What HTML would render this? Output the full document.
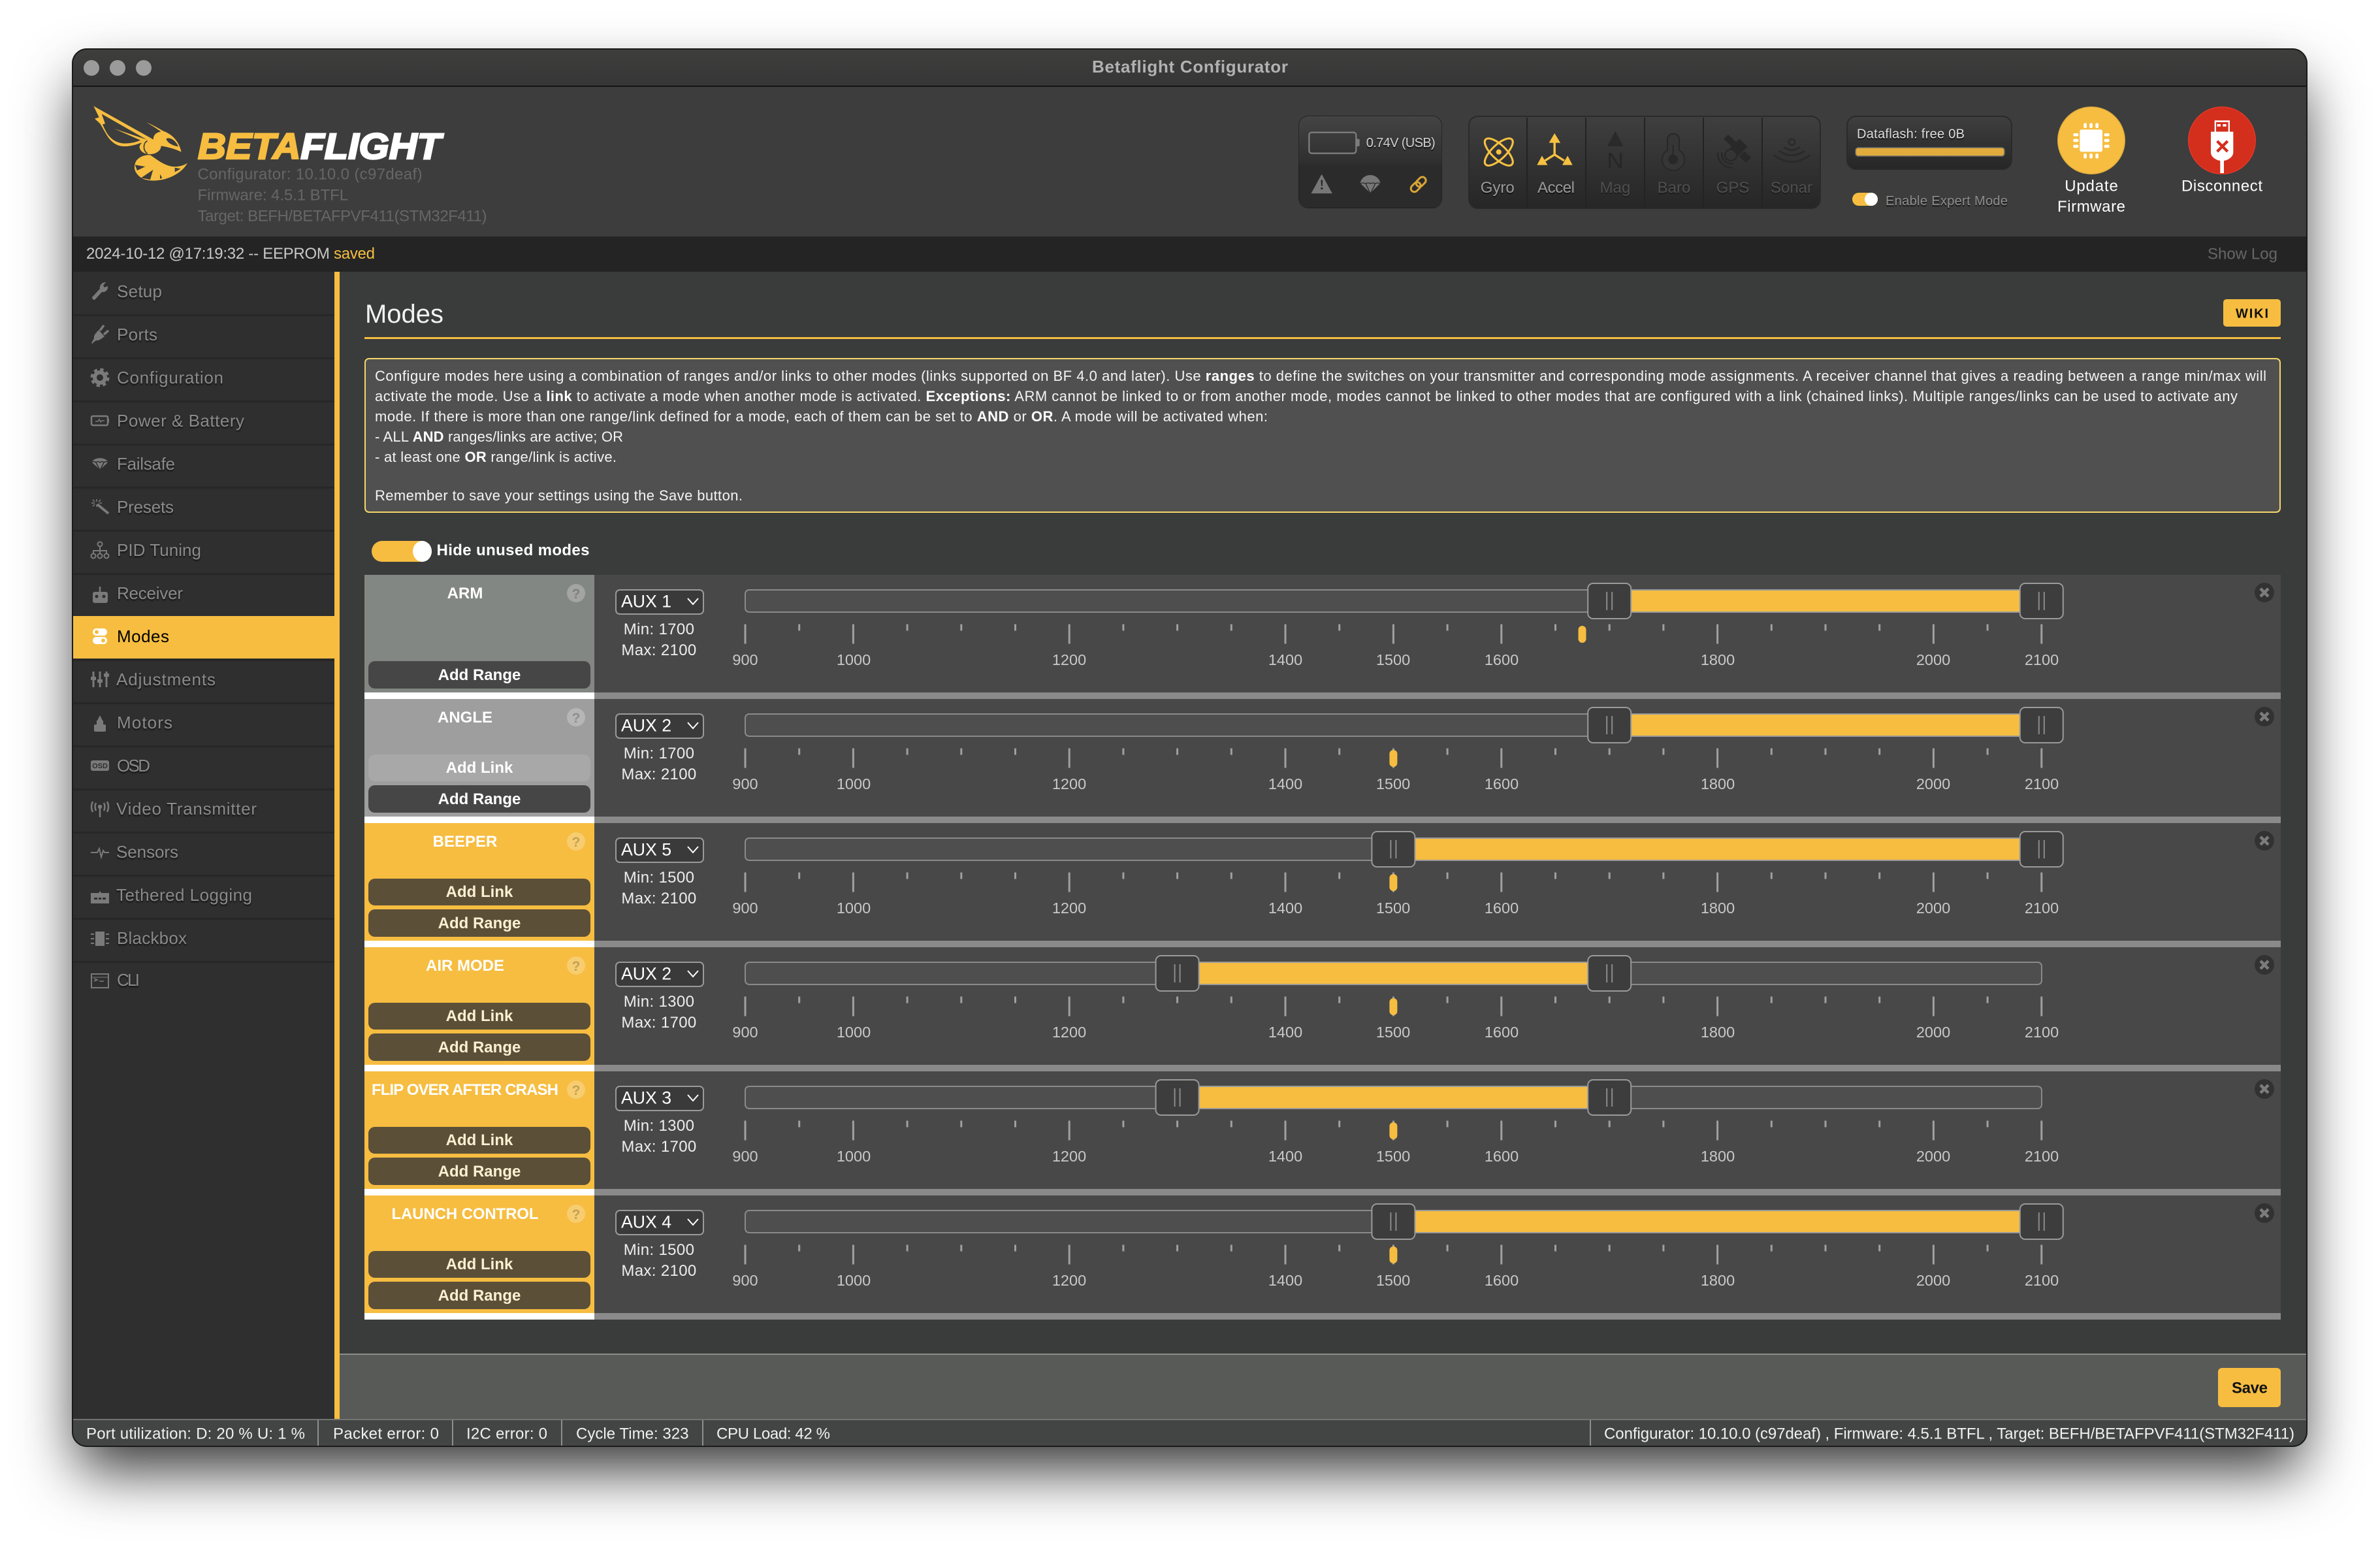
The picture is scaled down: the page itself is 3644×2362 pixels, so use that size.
<!DOCTYPE html>
<html><head><meta charset="utf-8"><title>Betaflight Configurator</title>
<style>
html,body{margin:0;padding:0;background:#fff;width:3644px;height:2362px;overflow:hidden}
#sh{position:absolute;left:111px;top:75px;width:3421px;height:2139px;border-radius:22px;box-shadow:0 44px 90px -8px rgba(0,0,0,.8)}
svg#p{position:absolute;left:0;top:0}
text{font-family:"Liberation Sans",sans-serif;font-size:24px;white-space:pre}
.s{font-size:26px;fill:#8a8a8a;text-shadow:0 2px 2px #111}
.v{fill:#666}
.i{font-size:22px;fill:#f4f4f4}
.i tspan{font-weight:bold;fill:#fff}
.t{font-weight:bold;fill:#fff;text-anchor:middle}
.q{font-weight:bold;font-size:21px;text-anchor:middle;fill:rgba(0,0,0,.22)}
.a{font-size:26.67px;fill:#fff}
.m{fill:#eee;text-anchor:middle;letter-spacing:.35px}
.n{fill:#c8c8c8;text-anchor:middle;font-size:23.5px}
.ba{font-weight:bold;fill:#fff;text-anchor:middle}
.by{font-weight:bold;fill:#fdf0d2;text-anchor:middle}
.st{fill:#f0f0f0}
.se{text-anchor:middle;fill:#9a9a9a;text-shadow:0 2px 1px #111}
.sd{text-anchor:middle;fill:#4e4e4e;text-shadow:0 2px 1px #1c1c1c}
.ic{fill:#7a7a7a;stroke:none}
</style></head>
<body>
<div id="sh"></div>
<svg id="p" width="3644" height="2362" viewBox="0 0 3644 2362" xmlns="http://www.w3.org/2000/svg">
<defs>
<clipPath id="win"><rect x="111" y="75" width="3421" height="2139" rx="22"/></clipPath>
<linearGradient id="g1" x1="0" y1="0" x2="0" y2="1"><stop offset="0" stop-color="#444"/><stop offset="1" stop-color="#2e2e2e"/></linearGradient>
<linearGradient id="g2" x1="0" y1="0" x2="0" y2="1"><stop offset="0" stop-color="#3f3f3f"/><stop offset="1" stop-color="#262626"/></linearGradient>
<linearGradient id="g3" x1="0" y1="0" x2="0" y2="1"><stop offset="0" stop-color="#3e3e3d"/><stop offset="1" stop-color="#363636"/></linearGradient>
<g id="sel"><rect x="943" y="23" width="134" height="37" rx="6" fill="#3a3a3a" stroke="#9a9a9a" stroke-width="2"/><path d="M1053 36l8 9 8-9" fill="none" stroke="#fff" stroke-width="2"/></g>
<g id="track">
<rect x="1141" y="23" width="1985" height="34" rx="6" fill="#4e4e4e" stroke="#8a8a8a" stroke-width="2"/>
<path fill="none" stroke="#a0a0a0" stroke-width="3" d="M1141 75.5v30M1223.7 75.5v10M1306.4 75.5v30M1389.1 75.5v10M1471.8 75.5v10M1554.5 75.5v10M1637.2 75.5v30M1719.9 75.5v10M1802.6 75.5v10M1885.3 75.5v10M1968 75.5v30M2050.7 75.5v10M2133.4 75.5v30M2216.1 75.5v10M2298.8 75.5v30M2381.5 75.5v10M2464.2 75.5v10M2546.9 75.5v10M2629.6 75.5v30M2712.3 75.5v10M2795 75.5v10M2877.7 75.5v10M2960.4 75.5v30M3043.1 75.5v10M3125.8 75.5v30"/>
<circle cx="3467" cy="27" r="15" fill="#323232"/><path d="M3461 21l12 12M3473 21l-12 12" stroke="#7c7c7c" stroke-width="4.500"/>
</g>
<g id="h"><rect x="-33" y="13" width="66" height="54" rx="8" fill="#3d3d3d" stroke="#9a9a9a" stroke-width="2"/><path d="M-4 26v28M4 26v28" stroke="#8b8b8b" stroke-width="2"/></g>
</defs>
<g clip-path="url(#win)">
<rect x="111" y="75" width="3421" height="2139" fill="#3a3c3b"/>
<!-- title bar -->
<rect x="111" y="75" width="3421" height="56" fill="url(#g3)"/>
<rect x="111" y="131" width="3421" height="2" fill="#151515"/>
<circle cx="140" cy="104" r="12" fill="#9b9b9b"/><circle cx="180" cy="104" r="12" fill="#9b9b9b"/><circle cx="220" cy="104" r="12" fill="#9b9b9b"/>
<text x="1672" y="111" font-weight="bold" fill="#b2b2b2" textLength="300" style="font-size:26px">Betaflight Configurator</text>
<!-- header -->
<rect x="111" y="133" width="3421" height="229" fill="#3c3d3c"/>
<svg x="135" y="155" width="160" height="130" viewBox="0 0 480 390">
<path fill="#f6bd41" fill-rule="evenodd" d="M25 22L300 176L296 184L240 192C210 203 185 208 160 207C125 205 100 180 85 155L55 103L30 80L50 74ZM62 58L78 103L66 106C85 150 105 188 165 194C190 194 215 190 240 179L120 126L268 176Z"/>
<path fill="#f6bd41" fill-rule="evenodd" d="M268 97C300 110 325 125 345 137C385 150 418 185 428 233C405 222 375 212 335 205C335 225 315 240 290 243C265 245 240 235 236 212C235 195 255 178 300 175C298 160 310 142 335 140C315 125 290 110 268 97ZM358 172C380 162 405 185 414 208C395 205 365 195 358 172Z"/>
<path d="M272 182C252 190 250 225 272 240" fill="none" stroke="#3c3d3c" stroke-width="5"/>
<path fill="#f6bd41" d="M285 247C310 262 345 295 390 300C415 302 440 295 456 283C440 315 400 345 350 358C310 368 260 368 235 345C212 325 205 300 222 272C235 255 260 245 285 247Z"/>
<path fill="#3c3d3c" d="M215 292L262 300L225 318ZM243 352L298 315L285 360ZM330 335L340 352L330 356ZM398 305L425 310L398 325Z"/>
</svg>
<text x="303" y="243" font-weight="bold" font-style="italic" textLength="372" lengthAdjust="spacingAndGlyphs" style="font-size:56px" stroke-width="2.600"><tspan fill="#f6bd41" stroke="#f6bd41">BETA</tspan><tspan fill="#fff" stroke="#fff">FLIGHT</tspan></text>
<text class="v" x="302.5" y="274.7" textLength="344">Configurator: 10.10.0 (c97deaf)</text>
<text class="v" x="302.5" y="306.7" textLength="230.6">Firmware: 4.5.1 BTFL</text>
<text class="v" x="302.5" y="338.7" textLength="443">Target: BEFH/BETAFPVF411(STM32F411)</text>
<!-- battery box -->
<rect x="1989" y="178" width="218" height="140" rx="14" fill="#2b2b2b" stroke="#262626" stroke-width="2"/>
<path d="M1989 252V192a14 14 0 0 1 14-14h190a14 14 0 0 1 14 14v60z" fill="url(#g1)"/>
<rect x="1990" y="252" width="216" height="65" rx="8" fill="#2b2b2b"/>
<svg x="1985" y="175" width="225" height="145" viewBox="0 0 675 435">
<rect x="58" y="83" width="216" height="96" rx="12" fill="none" stroke="#7c7c7c" stroke-width="7"/><path d="M276 113h8q6 0 6 6v22q0 6-6 6h-8z" fill="#7c7c7c"/>
<path d="M116 278L162 362H70Z" fill="#777" stroke="#777" stroke-width="3" stroke-linejoin="round"/><path d="M112 302h9l-2 28h-5zM112 336h9v9h-9z" fill="#2b2b2b"/>
<path d="M292 318C302 266 376 266 386 318L340 365Z" fill="#777"/><path d="M292 318L340 365L386 318M318 318L340 365L362 318M292 318Q305 312 318 318Q329 312 340 318Q351 312 362 318Q374 312 386 318" fill="none" stroke="#2b2b2b" stroke-width="4"/>
<g fill="none" stroke="#d9a536" stroke-width="9" transform="rotate(-45 560 322)"><rect x="518" y="306" width="50" height="32" rx="16"/><rect x="552" y="306" width="50" height="32" rx="16"/></g>
</svg>
<text x="2091.7" y="225" textLength="106" style="font-size:20px;text-shadow:0 2px 1px #111" fill="#cfcfcf">0.74V (USB)</text>
<!-- sensors box -->
<rect x="2249" y="178" width="538" height="141" rx="14" fill="url(#g2)" stroke="#2a2a2a" stroke-width="2"/>
<path d="M2338 180v138M2428 180v138M2518 180v138M2608 180v138M2698 180v138" stroke="#232323" stroke-width="2"/>
<svg x="2250" y="180" width="540" height="140" viewBox="0 0 1568 420" preserveAspectRatio="none">
<g fill="none" stroke="#f6c142" stroke-width="9"><ellipse cx="130" cy="158" rx="82" ry="32" transform="rotate(45 130 158)"/><ellipse cx="130" cy="158" rx="82" ry="32" transform="rotate(-45 130 158)"/></g><circle cx="130" cy="158" r="12" fill="#f6c142"/>
<path d="M378 110V170L335 198M378 170L421 198" fill="none" stroke="#f6c142" stroke-width="10"/><path d="M378 72L404 116H353ZM300 218L322 175L347 218ZM458 218L412 218L436 175Z" fill="#f6c142"/>
<path d="M648 62L684 132H612Z" fill="#2a2a2a"/>
<text x="648" y="233" text-anchor="middle" style="font-size:104px" fill="#262626">N</text>
<path d="M880 100a25 25 0 0 1 52 0V150a50 50 0 1 1-52 0Z" fill="#363636" stroke="#282828" stroke-width="6"/><circle cx="905" cy="192" r="22" fill="#282828"/><path d="M905 125v50" stroke="#282828" stroke-width="6"/>
<g fill="#282828"><path d="M1150 78L1185 112L1165 132L1130 98ZM1200 98L1236 134L1194 176L1158 140ZM1222 155L1252 185L1228 208L1198 178Z"/></g>
<g fill="none" stroke="#282828" stroke-width="7"><circle cx="1162" cy="172" r="26"/><path d="M1122 160C1118 190 1140 215 1172 212M1104 160C1100 200 1130 232 1172 230"/></g>
<circle cx="1433" cy="112" r="14" fill="none" stroke="#2a2a2a" stroke-width="7"/>
<g fill="none" stroke="#2a2a2a" stroke-width="9"><path d="M1398 135Q1433 165 1468 135M1376 152Q1433 195 1490 152M1353 172Q1433 235 1513 172"/></g>
</svg>
<text class="se" x="2292.7" y="295" textLength="52">Gyro</text>
<text class="se" x="2382.5" y="295" textLength="57">Accel</text>
<text class="sd" x="2473" y="295">Mag</text>
<text class="sd" x="2563" y="295">Baro</text>
<text class="sd" x="2653" y="295">GPS</text>
<text class="sd" x="2743" y="295">Sonar</text>
<!-- dataflash -->
<rect x="2828" y="178" width="252" height="81" rx="14" fill="url(#g2)" stroke="#2a2a2a" stroke-width="2"/>
<text x="2843" y="211.7" textLength="165" style="font-size:20px;text-shadow:0 2px 1px #111" fill="#ddd">Dataflash: free 0B</text>
<rect x="2841" y="226" width="228" height="13" rx="4" fill="#e2ac3c" stroke="#6a6a6a" stroke-width="1.5"/>
<rect x="2836" y="295" width="39" height="20" rx="10" fill="#f6bd41"/><circle cx="2865" cy="305" r="10" fill="#fff"/>
<text x="2887" y="314" textLength="187" style="font-size:20px;text-shadow:0 2px 1px #111" fill="#8e8e8e">Enable Expert Mode</text>
<!-- update / disconnect -->
<svg x="3140" y="150" width="340" height="130" viewBox="0 0 1020 390">
<circle cx="186" cy="195" r="154" fill="#f6bd41" stroke="#d9a93c" stroke-width="4"/>
<rect x="133" y="145" width="104" height="102" rx="8" fill="#fff"/>
<g fill="#fff"><rect x="151" y="115" width="14" height="23" rx="6"/><rect x="178" y="115" width="14" height="23" rx="6"/><rect x="205" y="115" width="14" height="23" rx="6"/><rect x="151" y="255" width="14" height="23" rx="6"/><rect x="178" y="255" width="14" height="23" rx="6"/><rect x="205" y="255" width="14" height="23" rx="6"/><rect x="103" y="162" width="24" height="14" rx="6"/><rect x="103" y="188" width="24" height="14" rx="6"/><rect x="103" y="215" width="24" height="14" rx="6"/><rect x="245" y="162" width="24" height="14" rx="6"/><rect x="245" y="188" width="24" height="14" rx="6"/><rect x="245" y="215" width="24" height="14" rx="6"/></g>
<circle cx="786" cy="195" r="154" fill="#d42e1d" stroke="#e8392a" stroke-width="4"/>
<rect x="752" y="103" width="70" height="56" fill="#fff"/><rect x="759" y="111" width="56" height="44" fill="#d42e1d"/><rect x="764" y="120" width="16" height="11" fill="#fff"/><rect x="790" y="120" width="16" height="11" fill="#fff"/>
<path d="M735 155H838V250C838 270 815 285 795 288V345H778V288C758 285 735 270 735 250Z" fill="#fff"/>
<path d="M764 198L812 246M812 198L764 246" stroke="#d42e1d" stroke-width="13"/>
</svg>
<text x="3202" y="292.7" fill="#fff" text-anchor="middle" textLength="81.6">Update</text>
<text x="3202" y="324" fill="#fff" text-anchor="middle" textLength="104">Firmware</text>
<text x="3402" y="292.7" fill="#fff" text-anchor="middle" textLength="124">Disconnect</text>
<!-- log -->
<rect x="111" y="362" width="3421" height="54" fill="#242424"/>
<text x="132" y="396" fill="#c8c8c8" textLength="442">2024-10-12 @17:19:32 -- EEPROM <tspan fill="#f6bd41">saved</tspan></text>
<text x="3380" y="396.7" fill="#666" textLength="107">Show Log</text>
<!-- sidebar -->
<rect x="111" y="416" width="401" height="1756" fill="#2f2f2f"/>
<rect x="512" y="416" width="8" height="1756" fill="#f6bd41"/>
<path d="M111 482.500H512M111 548.500H512M111 614.500H512M111 680.500H512M111 746.500H512M111 812.500H512M111 878.500H512M111 1010.500H512M111 1076.500H512M111 1142.500H512M111 1208.500H512M111 1274.500H512M111 1340.500H512M111 1406.500H512M111 1472.500H512" stroke="#272727" stroke-width="3"/>
<rect x="111" y="943" width="409" height="65" fill="#f6bd41"/>
<g class="ic">
<path transform="translate(139,432)" d="M2 23L14 10C13 5 17 0 23 0L19 5L21 8L26 6C27 12 22 16 17 15L6 27Q2 27 2 23Z"/>
<g transform="translate(139,498)"><path d="M1 27L5 20C4 15 8 12 12 7L21 17C16 21 12 24 8 23L2 28Z"/><path d="M14 8L20 0M20 14L27 8" stroke="#7a7a7a" stroke-width="3.500" fill="none"/></g>
<g transform="translate(139,564)" fill="none" stroke="#7a7a7a"><circle cx="14" cy="14" r="8" stroke-width="6"/><circle cx="14" cy="14" r="12" stroke-width="5" stroke-dasharray="5 4.42"/></g>
<g transform="translate(139,630)" fill="none" stroke="#7a7a7a"><rect x="1" y="7" width="25" height="14" rx="2" stroke-width="2.500"/><path d="M27 11v6" stroke-width="2"/><path d="M7 15h4l2-3 2 4 2-2h4" stroke-width="1.500"/></g>
<g transform="translate(139,696)"><path d="M1 12C5 3 23 3 27 12L14 24Z"/><path d="M1 12L14 24L27 12M8 12L14 24L20 12M1 12Q4.500 9 8 12Q11 9 14 12Q17 9 20 12Q23.500 9 27 12" fill="none" stroke="#2f2f2f" stroke-width="1.500"/></g>
<g transform="translate(139,762)" fill="none" stroke="#7a7a7a"><path d="M10 10L27 24" stroke-width="4"/><path d="M9 2v4M9 10v4M1 8h5M13 8h4M3 3l3 3M15 3l-3 3M3 13l3-3" stroke-width="1.500"/></g>
<g transform="translate(139,828)"><circle cx="14" cy="5" r="3.500" fill="none" stroke="#7a7a7a" stroke-width="2"/><circle cx="4" cy="23" r="3.500" fill="none" stroke="#7a7a7a" stroke-width="2"/><circle cx="14" cy="23" r="3.500" fill="none" stroke="#7a7a7a" stroke-width="2"/><circle cx="24" cy="23" r="3.500" fill="none" stroke="#7a7a7a" stroke-width="2"/><path d="M14 8v12M4 20v-5h20v5" fill="none" stroke="#7a7a7a" stroke-width="2"/></g>
<g transform="translate(139,894)"><rect x="3" y="12" width="23" height="17" rx="3"/><path d="M14 4v8" stroke="#7a7a7a" stroke-width="2.500"/><circle cx="9" cy="19" r="2.500" fill="#2f2f2f"/><circle cx="20" cy="19" r="2.500" fill="#2f2f2f"/></g>
<g transform="translate(139,960)"><rect x="3" y="2" width="22" height="11" rx="5.500" fill="#fff"/><rect x="3" y="15" width="22" height="11" rx="5.500" fill="#fff"/><circle cx="9" cy="7.500" r="3" fill="#f6bd41"/><circle cx="19" cy="20.500" r="3" fill="#f6bd41"/></g>
<g transform="translate(139,1026)"><path d="M4 2v24M14 2v24M24 2v24" stroke="#7a7a7a" stroke-width="3" fill="none"/><path d="M0 10h8v5H0zM10 14h8v5h-8zM20 5h8v5h-8z"/></g>
<g transform="translate(139,1092)"><rect x="5" y="17" width="18" height="11" rx="2"/><rect x="9" y="11" width="10" height="7"/><path d="M14 3l4 8h-8z"/></g>
<g transform="translate(139,1158)"><rect x="0" y="6" width="28" height="16" rx="3"/><text x="14" y="18" text-anchor="middle" style="font-size:11px;font-weight:bold" fill="#2f2f2f">OSD</text></g>
<g transform="translate(139,1224)" fill="none" stroke="#7a7a7a" stroke-width="2.500"><path d="M14 13v14" /><circle cx="14" cy="11" r="2" fill="#7a7a7a"/><path d="M8 5Q5 11 8 17M20 5Q23 11 20 17M3 3Q-1 11 3 19M25 3Q29 11 25 19"/></g>
<polyline transform="translate(139,1290)" points="0,15 10,15 13,9 16,22 19,12 21,15 28,15" fill="none" stroke="#7a7a7a" stroke-width="2"/>
<g transform="translate(139,1356)"><path d="M0 11h12l2-3 2 3h12v16H0z"/><path d="M5 18h5v3H5zM12 18h4v3h-4zM18 18h5v3h-5z" fill="#2f2f2f"/></g>
<g transform="translate(139,1422)"><rect x="7" y="4" width="14" height="22"/><path d="M0 8h5M0 15h5M0 22h5M23 8h5M23 15h5M23 22h5" stroke="#7a7a7a" stroke-width="2"/></g>
<g transform="translate(139,1486)" fill="none" stroke="#7a7a7a" stroke-width="2"><rect x="1" y="5" width="26" height="21"/><path d="M1 10h26" stroke-width="1"/><path d="M5 12l5 2-5 2M13 16h7" stroke-width="1.500"/></g>
</g>
<text class="s" x="179" y="455" textLength="69">Setup</text>
<text class="s" x="179" y="521" textLength="62">Ports</text>
<text class="s" x="179" y="587" textLength="163">Configuration</text>
<text class="s" x="179" y="653" textLength="195">Power &amp; Battery</text>
<text class="s" x="179" y="719" textLength="89">Failsafe</text>
<text class="s" x="179" y="785" textLength="87">Presets</text>
<text class="s" x="179" y="851" textLength="129">PID Tuning</text>
<text class="s" x="179" y="917" textLength="101">Receiver</text>
<text class="s" x="179" y="983" textLength="80" style="fill:#000;text-shadow:none">Modes</text>
<text class="s" x="178" y="1049" textLength="152">Adjustments</text>
<text class="s" x="179" y="1115" textLength="85">Motors</text>
<text class="s" x="179" y="1181" textLength="51">OSD</text>
<text class="s" x="178" y="1247" textLength="215">Video Transmitter</text>
<text class="s" x="178" y="1313" textLength="95">Sensors</text>
<text class="s" x="178" y="1379" textLength="208">Tethered Logging</text>
<text class="s" x="179" y="1445" textLength="107">Blackbox</text>
<text class="s" x="179" y="1509" textLength="35">CLI</text>
<!-- content header -->
<text x="559" y="494" fill="#f2f2f2" style="font-size:40px" textLength="120">Modes</text>
<rect x="558" y="516" width="2934" height="3" fill="#f6bd41"/>
<rect x="3404" y="458" width="88" height="42" rx="5" fill="#f6bd41"/>
<text x="3448" y="486.700" text-anchor="middle" font-weight="bold" style="font-size:20px" fill="#111" textLength="50">WIKI</text>
<!-- info -->
<rect x="559" y="549" width="2932" height="235" rx="6" fill="#505050" stroke="#f4d76a" stroke-width="2"/>
<text class="i" x="574" y="583" textLength="2896">Configure modes here using a combination of ranges and/or links to other modes (links supported on BF 4.0 and later). Use <tspan>ranges</tspan> to define the switches on your transmitter and corresponding mode assignments. A receiver channel that gives a reading between a range min/max will</text>
<text class="i" x="574" y="614" textLength="2852">activate the mode. Use a <tspan>link</tspan> to activate a mode when another mode is activated. <tspan>Exceptions:</tspan> ARM cannot be linked to or from another mode, modes cannot be linked to other modes that are configured with a link (chained links). Multiple ranges/links can be used to activate any</text>
<text class="i" x="574" y="645" textLength="1367">mode. If there is more than one range/link defined for a mode, each of them can be set to <tspan>AND</tspan> or <tspan>OR</tspan>. A mode will be activated when:</text>
<text class="i" x="574" y="676" textLength="380">- ALL <tspan>AND</tspan> ranges/links are active; OR</text>
<text class="i" x="574" y="707" textLength="370">- at least one <tspan>OR</tspan> range/link is active.</text>
<text class="i" x="574" y="766" textLength="563">Remember to save your settings using the Save button.</text>
<!-- hide toggle -->
<rect x="569" y="828" width="92" height="32" rx="16" fill="#f6bd41"/><ellipse cx="646.500" cy="844" rx="14.500" ry="16" fill="#fff"/>
<text x="668.500" y="850" font-weight="bold" fill="#fff" textLength="234">Hide unused modes</text>

<!-- ROW 1 -->
<g transform="translate(0,880)">
<rect x="558" width="352" height="180" fill="#838783"/><rect x="558" y="180" width="352" height="10" fill="#fff"/><rect x="910" width="2582" height="180" fill="#484848"/><rect x="910" y="180" width="2582" height="10" fill="#8a8a8a"/>
<text class="t" x="712" y="36">ARM</text>
<circle cx="882" cy="28" r="14" fill="rgba(255,255,255,.25)"/><text class="q" x="882" y="36">?</text>
<rect x="564" y="132" width="340" height="42" rx="10" fill="#464646"/><text class="ba" x="734" y="161">Add Range</text>
<use href="#sel"/><text class="a" x="951" y="49.500">AUX 1</text>
<text class="m" x="1009" y="91">Min: 1700</text><text class="m" x="1009" y="123">Max: 2100</text>
<use href="#track"/>
<rect x="2464" y="22" width="662" height="36" fill="#9a9a9a"/><rect x="2464" y="24" width="662" height="32" fill="#f6bd41"/>
<use href="#h" x="2464.200"/><use href="#h" x="3125.800"/>
<rect x="2416.500" y="78" width="12" height="26" rx="6" fill="#f6bd41"/>
<text class="n" x="1141" y="138">900</text><text class="n" x="1307" y="138">1000</text><text class="n" x="1637" y="138">1200</text><text class="n" x="1968" y="138">1400</text><text class="n" x="2133" y="138">1500</text><text class="n" x="2299" y="138">1600</text><text class="n" x="2630" y="138">1800</text><text class="n" x="2960" y="138">2000</text><text class="n" x="3126" y="138">2100</text>
</g>
<!-- ROW 2 -->
<g transform="translate(0,1070)">
<rect x="558" width="352" height="180" fill="#9e9e9e"/><rect x="558" y="180" width="352" height="10" fill="#fff"/><rect x="910" width="2582" height="180" fill="#484848"/><rect x="910" y="180" width="2582" height="10" fill="#8a8a8a"/>
<text class="t" x="712" y="36">ANGLE</text>
<circle cx="882" cy="28" r="14" fill="rgba(255,255,255,.25)"/><text class="q" x="882" y="36">?</text>
<rect x="564" y="85" width="340" height="41" rx="10" fill="#a8a8a8"/><text class="ba" x="734" y="113">Add Link</text>
<rect x="564" y="132" width="340" height="42" rx="10" fill="#464646"/><text class="ba" x="734" y="161">Add Range</text>
<use href="#sel"/><text class="a" x="951" y="49.500">AUX 2</text>
<text class="m" x="1009" y="91">Min: 1700</text><text class="m" x="1009" y="123">Max: 2100</text>
<use href="#track"/>
<rect x="2464" y="22" width="662" height="36" fill="#9a9a9a"/><rect x="2464" y="24" width="662" height="32" fill="#f6bd41"/>
<use href="#h" x="2464.200"/><use href="#h" x="3125.800"/>
<rect x="2127.400" y="78" width="12" height="26" rx="6" fill="#f6bd41"/>
<text class="n" x="1141" y="138">900</text><text class="n" x="1307" y="138">1000</text><text class="n" x="1637" y="138">1200</text><text class="n" x="1968" y="138">1400</text><text class="n" x="2133" y="138">1500</text><text class="n" x="2299" y="138">1600</text><text class="n" x="2630" y="138">1800</text><text class="n" x="2960" y="138">2000</text><text class="n" x="3126" y="138">2100</text>
</g>
<!-- ROW 3 -->
<g transform="translate(0,1260)">
<rect x="558" width="352" height="180" fill="#f6bd41"/><rect x="558" y="180" width="352" height="10" fill="#fff"/><rect x="910" width="2582" height="180" fill="#484848"/><rect x="910" y="180" width="2582" height="10" fill="#8a8a8a"/>
<text class="t" x="712" y="36">BEEPER</text>
<circle cx="882" cy="28" r="14" fill="rgba(255,255,255,.25)"/><text class="q" x="882" y="36">?</text>
<rect x="564" y="85" width="340" height="41" rx="10" fill="#5b4f38"/><text class="by" x="734" y="113">Add Link</text>
<rect x="564" y="132" width="340" height="42" rx="10" fill="#5b4f38"/><text class="by" x="734" y="161">Add Range</text>
<use href="#sel"/><text class="a" x="951" y="49.500">AUX 5</text>
<text class="m" x="1009" y="91">Min: 1500</text><text class="m" x="1009" y="123">Max: 2100</text>
<use href="#track"/>
<rect x="2133" y="22" width="993" height="36" fill="#9a9a9a"/><rect x="2133" y="24" width="993" height="32" fill="#f6bd41"/>
<use href="#h" x="2133.400"/><use href="#h" x="3125.800"/>
<rect x="2127.400" y="78" width="12" height="26" rx="6" fill="#f6bd41"/>
<text class="n" x="1141" y="138">900</text><text class="n" x="1307" y="138">1000</text><text class="n" x="1637" y="138">1200</text><text class="n" x="1968" y="138">1400</text><text class="n" x="2133" y="138">1500</text><text class="n" x="2299" y="138">1600</text><text class="n" x="2630" y="138">1800</text><text class="n" x="2960" y="138">2000</text><text class="n" x="3126" y="138">2100</text>
</g>
<!-- ROW 4 -->
<g transform="translate(0,1450)">
<rect x="558" width="352" height="180" fill="#f6bd41"/><rect x="558" y="180" width="352" height="10" fill="#fff"/><rect x="910" width="2582" height="180" fill="#484848"/><rect x="910" y="180" width="2582" height="10" fill="#8a8a8a"/>
<text class="t" x="712" y="36">AIR MODE</text>
<circle cx="882" cy="28" r="14" fill="rgba(255,255,255,.25)"/><text class="q" x="882" y="36">?</text>
<rect x="564" y="85" width="340" height="41" rx="10" fill="#5b4f38"/><text class="by" x="734" y="113">Add Link</text>
<rect x="564" y="132" width="340" height="42" rx="10" fill="#5b4f38"/><text class="by" x="734" y="161">Add Range</text>
<use href="#sel"/><text class="a" x="951" y="49.500">AUX 2</text>
<text class="m" x="1009" y="91">Min: 1300</text><text class="m" x="1009" y="123">Max: 1700</text>
<use href="#track"/>
<rect x="1803" y="22" width="661" height="36" fill="#9a9a9a"/><rect x="1803" y="24" width="661" height="32" fill="#f6bd41"/>
<use href="#h" x="1802.600"/><use href="#h" x="2464.200"/>
<rect x="2127.400" y="78" width="12" height="26" rx="6" fill="#f6bd41"/>
<text class="n" x="1141" y="138">900</text><text class="n" x="1307" y="138">1000</text><text class="n" x="1637" y="138">1200</text><text class="n" x="1968" y="138">1400</text><text class="n" x="2133" y="138">1500</text><text class="n" x="2299" y="138">1600</text><text class="n" x="2630" y="138">1800</text><text class="n" x="2960" y="138">2000</text><text class="n" x="3126" y="138">2100</text>
</g>
<!-- ROW 5 -->
<g transform="translate(0,1640)">
<rect x="558" width="352" height="180" fill="#f6bd41"/><rect x="558" y="180" width="352" height="10" fill="#fff"/><rect x="910" width="2582" height="180" fill="#484848"/><rect x="910" y="180" width="2582" height="10" fill="#8a8a8a"/>
<text class="t" x="712" y="36" textLength="286">FLIP OVER AFTER CRASH</text>
<circle cx="882" cy="28" r="14" fill="rgba(255,255,255,.25)"/><text class="q" x="882" y="36">?</text>
<rect x="564" y="85" width="340" height="41" rx="10" fill="#5b4f38"/><text class="by" x="734" y="113">Add Link</text>
<rect x="564" y="132" width="340" height="42" rx="10" fill="#5b4f38"/><text class="by" x="734" y="161">Add Range</text>
<use href="#sel"/><text class="a" x="951" y="49.500">AUX 3</text>
<text class="m" x="1009" y="91">Min: 1300</text><text class="m" x="1009" y="123">Max: 1700</text>
<use href="#track"/>
<rect x="1803" y="22" width="661" height="36" fill="#9a9a9a"/><rect x="1803" y="24" width="661" height="32" fill="#f6bd41"/>
<use href="#h" x="1802.600"/><use href="#h" x="2464.200"/>
<rect x="2127.400" y="78" width="12" height="26" rx="6" fill="#f6bd41"/>
<text class="n" x="1141" y="138">900</text><text class="n" x="1307" y="138">1000</text><text class="n" x="1637" y="138">1200</text><text class="n" x="1968" y="138">1400</text><text class="n" x="2133" y="138">1500</text><text class="n" x="2299" y="138">1600</text><text class="n" x="2630" y="138">1800</text><text class="n" x="2960" y="138">2000</text><text class="n" x="3126" y="138">2100</text>
</g>
<!-- ROW 6 -->
<g transform="translate(0,1830)">
<rect x="558" width="352" height="180" fill="#f6bd41"/><rect x="558" y="180" width="352" height="10" fill="#fff"/><rect x="910" width="2582" height="180" fill="#484848"/><rect x="910" y="180" width="2582" height="10" fill="#8a8a8a"/>
<text class="t" x="712" y="36" textLength="225">LAUNCH CONTROL</text>
<circle cx="882" cy="28" r="14" fill="rgba(255,255,255,.25)"/><text class="q" x="882" y="36">?</text>
<rect x="564" y="85" width="340" height="41" rx="10" fill="#5b4f38"/><text class="by" x="734" y="113">Add Link</text>
<rect x="564" y="132" width="340" height="42" rx="10" fill="#5b4f38"/><text class="by" x="734" y="161">Add Range</text>
<use href="#sel"/><text class="a" x="951" y="49.500">AUX 4</text>
<text class="m" x="1009" y="91">Min: 1500</text><text class="m" x="1009" y="123">Max: 2100</text>
<use href="#track"/>
<rect x="2133" y="22" width="993" height="36" fill="#9a9a9a"/><rect x="2133" y="24" width="993" height="32" fill="#f6bd41"/>
<use href="#h" x="2133.400"/><use href="#h" x="3125.800"/>
<rect x="2127.400" y="78" width="12" height="26" rx="6" fill="#f6bd41"/>
<text class="n" x="1141" y="138">900</text><text class="n" x="1307" y="138">1000</text><text class="n" x="1637" y="138">1200</text><text class="n" x="1968" y="138">1400</text><text class="n" x="2133" y="138">1500</text><text class="n" x="2299" y="138">1600</text><text class="n" x="2630" y="138">1800</text><text class="n" x="2960" y="138">2000</text><text class="n" x="3126" y="138">2100</text>
</g>
<!-- footer -->
<rect x="520" y="2072" width="3012" height="100" fill="#585a58"/>
<rect x="520" y="2072" width="3012" height="2" fill="#8c8e8c"/>
<rect x="3396" y="2094" width="96" height="60" rx="6" fill="#f6bd41"/>
<text x="3444.500" y="2132.700" text-anchor="middle" font-weight="bold" fill="#111" textLength="55">Save</text>
<!-- status -->
<rect x="111" y="2172" width="3421" height="42" fill="#434544"/>
<rect x="111" y="2172" width="3421" height="2" fill="#727472"/>
<path d="M487 2174v40M693 2174v40M860 2174v40M1076 2174v40M2435 2174v40" stroke="#8e8e8e" stroke-width="2"/>
<text class="st" x="132" y="2202.700" textLength="335">Port utilization: D: 20 % U: 1 %</text>
<text class="st" x="510" y="2202.700" textLength="162">Packet error: 0</text>
<text class="st" x="714" y="2202.700" textLength="124">I2C error: 0</text>
<text class="st" x="882" y="2202.700" textLength="172.500">Cycle Time: 323</text>
<text class="st" x="1097" y="2202.700" textLength="174">CPU Load: 42 %</text>
<text class="st" x="2456" y="2202.700" textLength="1057">Configurator: 10.10.0 (c97deaf) , Firmware: 4.5.1 BTFL , Target: BEFH/BETAFPVF411(STM32F411)</text>
</g>
<rect x="111" y="75" width="3421" height="2139" rx="22" fill="none" stroke="#1a1a1a" stroke-width="2"/>
</svg>
</body></html>
